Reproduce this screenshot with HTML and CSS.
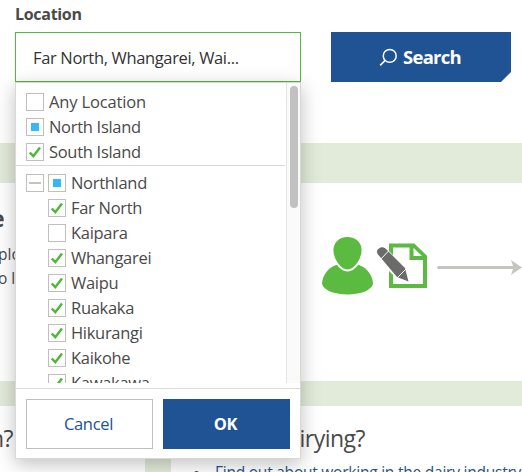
FILE: index.html
```
<!DOCTYPE html>
<html lang="en">
<head>
<meta charset="utf-8">
<title>Location search</title>
<link rel="stylesheet" href="styles.css">
</head>
<body>
<form class="search-bar">
  <div class="field">
    <label class="field-label"><span>Location</span></label>
    <div class="select"><span>Far North, Whangarei, Wai...</span></div>
    <div class="dropdown">
      <div class="list-area">
        <div class="list">
          <div class="group top">
            <div class="row"><i class="box"></i><span class="w-any">Any Location</span></div>
            <div class="row"><i class="box some"></i><span>North Island</span></div>
            <div class="row"><i class="box"><svg viewBox="0 0 16 16"><path d="M2.7 8.5 6.3 12.2 13 3.5"/></svg></i><span>South Island</span></div>
          </div>
          <div class="group">
            <div class="row"><i class="box minus"></i><i class="box some"></i><span>Northland</span></div>
            <div class="row child"><i class="box"><svg viewBox="0 0 16 16"><path d="M2.7 8.5 6.3 12.2 13 3.5"/></svg></i><span>Far North</span></div>
            <div class="row child"><i class="box"></i><span>Kaipara</span></div>
            <div class="row child"><i class="box"><svg viewBox="0 0 16 16"><path d="M2.7 8.5 6.3 12.2 13 3.5"/></svg></i><span>Whangarei</span></div>
            <div class="row child"><i class="box"><svg viewBox="0 0 16 16"><path d="M2.7 8.5 6.3 12.2 13 3.5"/></svg></i><span>Waipu</span></div>
            <div class="row child"><i class="box"><svg viewBox="0 0 16 16"><path d="M2.7 8.5 6.3 12.2 13 3.5"/></svg></i><span>Ruakaka</span></div>
            <div class="row child"><i class="box"><svg viewBox="0 0 16 16"><path d="M2.7 8.5 6.3 12.2 13 3.5"/></svg></i><span>Hikurangi</span></div>
            <div class="row child"><i class="box"><svg viewBox="0 0 16 16"><path d="M2.7 8.5 6.3 12.2 13 3.5"/></svg></i><span>Kaikohe</span></div>
            <div class="row child"><i class="box"><svg viewBox="0 0 16 16"><path d="M2.7 8.5 6.3 12.2 13 3.5"/></svg></i><span>Kawakawa</span></div>
          </div>
        </div>
        <div class="track"><div class="thumb"></div></div>
      </div>
      <div class="actions">
        <button type="button" class="btn cancel">Cancel</button>
        <button type="button" class="btn ok">OK</button>
      </div>
    </div>
  </div>
  <button type="button" class="search-btn">
    <svg class="lens" viewBox="0 0 20 20"><circle cx="11.3" cy="8.3" r="6.8"/><path d="M6.2 13.3 1.2 18.3"/></svg>
    <span>Search</span>
  </button>
</form>
<main class="content">
  <section class="intro">
    <div class="copy">
      <h2>e</h2>
      <p>plo</p>
      <p>o l</p>
    </div>
    <svg class="steps" viewBox="0 0 212 198">
      <g class="green">
        <path d="M26 82C17 85 12 94 12 101C14 108 26 111.500 37.500 111.500C49 111.500 61 108 63 101C63 94 58 85 49 82Z"/>
        <path class="head" d="M37.500 53C47 53 52.500 60 52.500 67C52.500 76 45 87.500 37.500 87.500C30 87.500 22.500 76 22.500 67C22.500 60 28 53 37.500 53Z"/>
        <path class="sheet" d="M81 62.500H103.500L115 73.500V103H81Z"/>
        <path class="fold" d="M101.500 63V75H114"/>
      </g>
      <path class="halo" d="M71 70 93 92"/>
      <path class="pencil" d="M68 71.500Q65.500 67.500 69 65.500Q72 63 75.500 65.500L95 85L98.500 98.500L87 94Z"/>
      <path class="detail" d="M70 77 78.500 68M87.500 94.500 96.500 85.500"/>
      <path class="line" d="M128.500 84.500H203"/>
      <path class="tip" d="M201 77 212 84.500 201 92 203.500 84.500Z"/>
    </svg>
  </section>
  <section class="cards">
    <article class="card left"><h3>n?</h3></article>
    <article class="card right">
      <h3>Dairying?</h3>
      <ul><li><a>Find out about working in the dairy industry</a></li></ul>
    </article>
  </section>
</main>
</body>
</html>
```
FILE: styles.css
```
* { box-sizing: border-box; }
body {
  margin: 0;
  width: 522px;
  height: 472px;
  overflow: hidden;
  background: #fff;
  color: #4a4a49;
  font: 16.500px/25px "Open Sans", sans-serif;
}
h2, h3, p, ul { margin: 0; padding: 0; }
.search-bar {
  display: flex;
  align-items: flex-end;
  gap: 30px;
  height: 82px;
  padding-left: 15px;
}
.field { position: relative; width: 286px; }
.field-label {
  display: block;
  height: 30px;
  font-weight: 700;
  font-size: 16px;
  letter-spacing: -0.3px;
}
.select {
  height: 50px;
  padding: 0 17px;
  border: 1px solid #55b93d;
  background: #fff;
  color: #333;
  line-height: 49px;
  white-space: nowrap;
  letter-spacing: -0.35px;
}
.dropdown {
  position: absolute;
  z-index: 2;
  top: 100%;
  left: 0;
  width: 286px;
  height: 377px;
  border: 1px solid #d8d8d6;
  background: #fff;
  box-shadow: 0 5px 18px rgba(0, 0, 0, 0.25);
}
.list-area { display: flex; height: 300px; overflow: hidden; }
.list { flex: 1; }
.group { padding: 4px 0 0 10px; }
.top {
  height: 83px;
  padding-top: 6px;
  margin-right: 1px;
  border-bottom: 1px solid #d8d8d6;
}
.row {
  display: flex;
  align-items: center;
  gap: 4px;
  height: 25px;
  letter-spacing: -0.3px;
  white-space: nowrap;
}
.row .w-any { letter-spacing: -0.15px; }
.child { padding-left: 22px; }
.row span { margin-left: 1px; }
.box {
  display: grid;
  flex: none;
  place-items: center;
  width: 18px;
  height: 18px;
  border: 1px solid #bfbfbc;
  background: #fff;
}
.box svg { width: 16px; height: 16px; fill: none; stroke: #4fb83a; stroke-width: 2.500; }
.some::before { content: ""; width: 8px; height: 8px; background: #33b9fa; }
.minus::before { content: ""; width: 12px; height: 2px; background: #c3c3c0; }
.track { width: 14px; padding: 3px 0 0 3px; border-left: 1px solid #e4e4e4; background: #fafafa; }
.thumb { width: 8px; height: 122px; border-radius: 4px; background: #c1c1c1; }
.actions {
  display: flex;
  gap: 10px;
  margin-top: 5px;
  padding: 10px;
  border-top: 1px solid #d8dad6;
}
.btn {
  width: 127px;
  height: 50px;
  padding: 0 2px 0 0;
  border: 1px solid #bfbfbc;
  background: #fff;
  color: #205394;
  font: 16.500px/48px "Open Sans", sans-serif;
  letter-spacing: -0.3px;
}
.ok { border-color: #205394; background: #205394; color: #fff; font-weight: 700; }
.search-btn {
  display: flex;
  align-items: center;
  justify-content: center;
  gap: 5px;
  width: 180px;
  height: 50px;
  padding: 0 2px 0 0;
  border: 0;
  background: #205394;
  clip-path: polygon(0 0, 100% 0, 100% 40px, 170px 100%, 0 100%);
  color: #fff;
  font: 700 18.500px/50px "Open Sans", sans-serif;
  letter-spacing: -0.7px;
}
.lens { width: 19px; height: 19px; fill: none; stroke: #fff; stroke-width: 1.600; }
.content { margin-top: 61px; border-top: 40px solid #e2ebda; }
.intro {
  display: flex;
  justify-content: space-between;
  height: 198px;
}
.copy { width: 15px; overflow: hidden; padding-top: 18px; white-space: nowrap; font-size: 15.500px; }
.copy h2 { margin: 0 0 7px -9px; height: 34px; font-size: 23px; line-height: 34px; }
.copy p { margin-left: -2px; height: 24px; line-height: 24px; }
.steps { width: 212px; height: 198px; }
.green { fill: #5abb40; }
.head { stroke: #fff; stroke-width: 1.800; }
.sheet, .fold { fill: #fff; stroke: #5abb40; stroke-width: 4; }
.pencil { fill: #6b6b6a; }
.halo { stroke: #fff; stroke-width: 14; }
.detail { fill: none; stroke: #fff; stroke-width: 1; }
.line { stroke: #c5c5c1; stroke-width: 3; stroke-linecap: round; }
.tip { fill: #c5c5c1; }
.cards {
  display: grid;
  grid-template-columns: 145px 351px;
  gap: 26px;
  height: 91px;
  padding-top: 25px;
  background: #e2ebda;
}
.card { padding-top: 15px; background: #fff; overflow: hidden; }
.card h3 { height: 34px; font-size: 23px; font-weight: 400; line-height: 34px; letter-spacing: -0.5px; white-space: nowrap; }
.left h3 { margin-left: -10px; }
.right h3 { margin-left: 100px; }
.card ul { padding: 5px 0 0 23px; list-style: none; }
.card li { display: flex; height: 25px; font-size: 15.500px; letter-spacing: -0.23px; white-space: nowrap; }
.card li::before { content: ""; width: 5px; height: 5px; margin: 11px 16px 0 0; border-radius: 50%; background: #4a4a49; }
.card a { color: #205394; }
```
